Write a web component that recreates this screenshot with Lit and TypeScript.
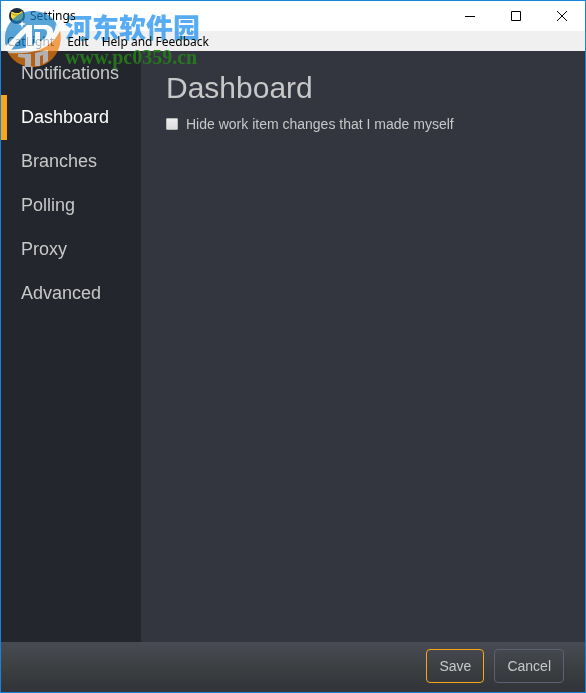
import { LitElement, html, css } from "lit";
import { customElement, state } from "lit/decorators.js";

@customElement("title-bar")
class TitleBar extends LitElement {
  static styles = css`
    :host { display: flex; align-items: center; height: 30px; background: #fff; color: #000; }
    .icon { width: 16px; height: 16px; margin: 0 5px 0 8px; }
    .title { flex: 1; font-size: 12px; line-height: 16px; }
    .control { width: 46px; height: 30px; padding: 0; border: 0; background: none; display: grid; place-items: center; }
  `;
  render() {
    return html`
      <svg class="icon" viewBox="0 0 16 16" aria-hidden="true">
        <circle cx="8" cy="8" r="8" fill="#1d2b3c"/>
        <path d="M2 4 L4 4 L6 5 L10 5 L13 3 L14 5 V9 L12 12 L8 13 L4 12 L2 9Z" fill="#f9dc3c"/>
        <path d="M2 5 L5 7 H10 L14 4" fill="none" stroke="#a99527"/>
      </svg>
      <span class="title">Settings</span>
      <button class="control" aria-label="Minimize"><svg width="10" height="10"><path d="M0 5.5H10" stroke="#000"/></svg></button>
      <button class="control" aria-label="Maximize"><svg width="10" height="10"><path d="M.5 .5H9.500V9.500H.5Z" fill="none" stroke="#000"/></svg></button>
      <button class="control" aria-label="Close"><svg width="10" height="10"><path d="M0 0L10 10M10 0L0 10" stroke="#000"/></svg></button>
    `;
  }
}

@customElement("site-watermark")
class SiteWatermark extends LitElement {
  static styles = css`
    :host { position: absolute; left: 4px; top: 10px; display: flex; gap: 4px; pointer-events: none; }
    .logo { width: 56px; height: 56px; opacity: 0.7; }
    .words { display: flex; flex-direction: column; gap: 4px; }
    .name { font: 900 27px/32px "Noto Sans CJK SC", sans-serif; color: #1e90f0; opacity: 0.75; white-space: nowrap; mix-blend-mode: darken; }
    .site { font: 700 20px/20px "Liberation Serif", serif; color: #267d1c; opacity: 0.9; }
  `;
  render() {
    return html`
      <svg class="logo" viewBox="0 0 56 56" aria-hidden="true">
        <path d="M0 32 C-2 13 12 0 28 0 C39 0 48 5 52 14 L55 22 C44 36 20 36 4 42Z" fill="#1580c8"/>
        <path d="M55 19 C59 39 46 56 28 56 C17 56 6 50 2 39 C22 43 43 37 55 19Z" fill="#f07c0c"/>
        <path d="M0 36 C7 29 15 20 22 14 H27 V37 H21 V22 C15 28 9 34 5 41 L1 40Z" fill="#fff"/>
        <path d="M29 14 H40 C50 14 50 24 44 30 C38 35 33 36 27 36 L29 32 C42 31 46 18 38 18 H29Z" fill="#fff"/>
        <path d="M30 21 H35 V31 L30 32Z" fill="#fff"/>
        <path d="M51 13 C50 29 31 37 4 39 L3 42 C28 44 46 38 55 20Z" fill="#fff"/>
        <path d="M13 43 H26 V56 H20 V47 L13 46Z M30 42 L43 39 V50 L38 53 V44 L35 45 V55 H30Z" fill="#eee"/>
        <path d="M17 9 L18 12 L21 13 L18 14 L17 17 L16 14 L13 13 L16 12Z" fill="#fff"/>
      </svg>
      <div class="words"><span class="name">河东软件园</span><span class="site">www.pc0359.cn</span></div>
    `;
  }
}

@customElement("app-root")
class AppRoot extends LitElement {
  static styles = css`
    :host { display: flex; flex-direction: column; position: relative; min-height: 100vh; box-sizing: border-box;
      border: 1px solid #1883d7; background: #33363f; color: #c8c8c8; font-family: "Liberation Sans", Arial, sans-serif; }
    title-bar { font-family: "Noto Sans", sans-serif; }
    .menu { display: flex; gap: 1px; height: 20px; background: #f0f0f0; }
    .menu button { border: 0; padding: 1px 6px 0; background: none; font: 12px/20px "Noto Sans", sans-serif; color: #000; }
    .body { flex: 1; display: flex; }
    nav { width: 140px; background: #24262d; }
    nav a { display: block; position: relative; padding: 0 20px; font-size: 18px; line-height: 44px; color: #c8c8c8; text-decoration: none; }
    nav a.active { color: #fff; }
    nav a.active::before { content: ""; position: absolute; left: 0; top: 0; bottom: -1px; width: 6px; background: #faa61a; }
    main { flex: 1; padding: 20px 25px; }
    h1 { margin: 0 0 10px; font-size: 30px; line-height: 33px; font-weight: 400; }
    label { display: flex; align-items: center; gap: 8px; font-size: 14px; line-height: 20px; }
    input { appearance: none; width: 12px; height: 12px; margin: 0; border: 1px solid #b8b8b8; border-radius: 1px; background: linear-gradient(#ededed, #dcdcdc); }
    input:checked { background: #faa61a; }
    footer { display: flex; justify-content: flex-end; align-items: center; gap: 10px; height: 50px; padding: 0 21px 2px;
      box-sizing: border-box; background: linear-gradient(#484b54, #3c4042 50%, #313338); }
    footer button { height: 34px; padding: 0 12px; border: 1px solid #5e6073; border-radius: 4px; background: none;
      color: #c8c8c8; font: 14px/20px "Liberation Sans", Arial, sans-serif; }
    footer .save { border-color: #faa61a; }
  `;
  @state() active = "Dashboard";
  render() {
    return html`
      <title-bar></title-bar>
      <div class="menu">${["CatLight", "Edit", "Help and Feedback"].map((m) => html`<button>${m}</button>`)}</div>
      <div class="body">
        <nav>${["Notifications", "Dashboard", "Branches", "Polling", "Proxy", "Advanced"].map(
          (n) => html`<a href="#" class=${n === this.active ? "active" : ""}>${n}</a>`)}</nav>
        <main><h1>Dashboard</h1><label><input type="checkbox" />Hide work item changes that I made myself</label></main>
      </div>
      <footer><button class="save">Save</button><button>Cancel</button></footer>
      <site-watermark></site-watermark>
    `;
  }
}
